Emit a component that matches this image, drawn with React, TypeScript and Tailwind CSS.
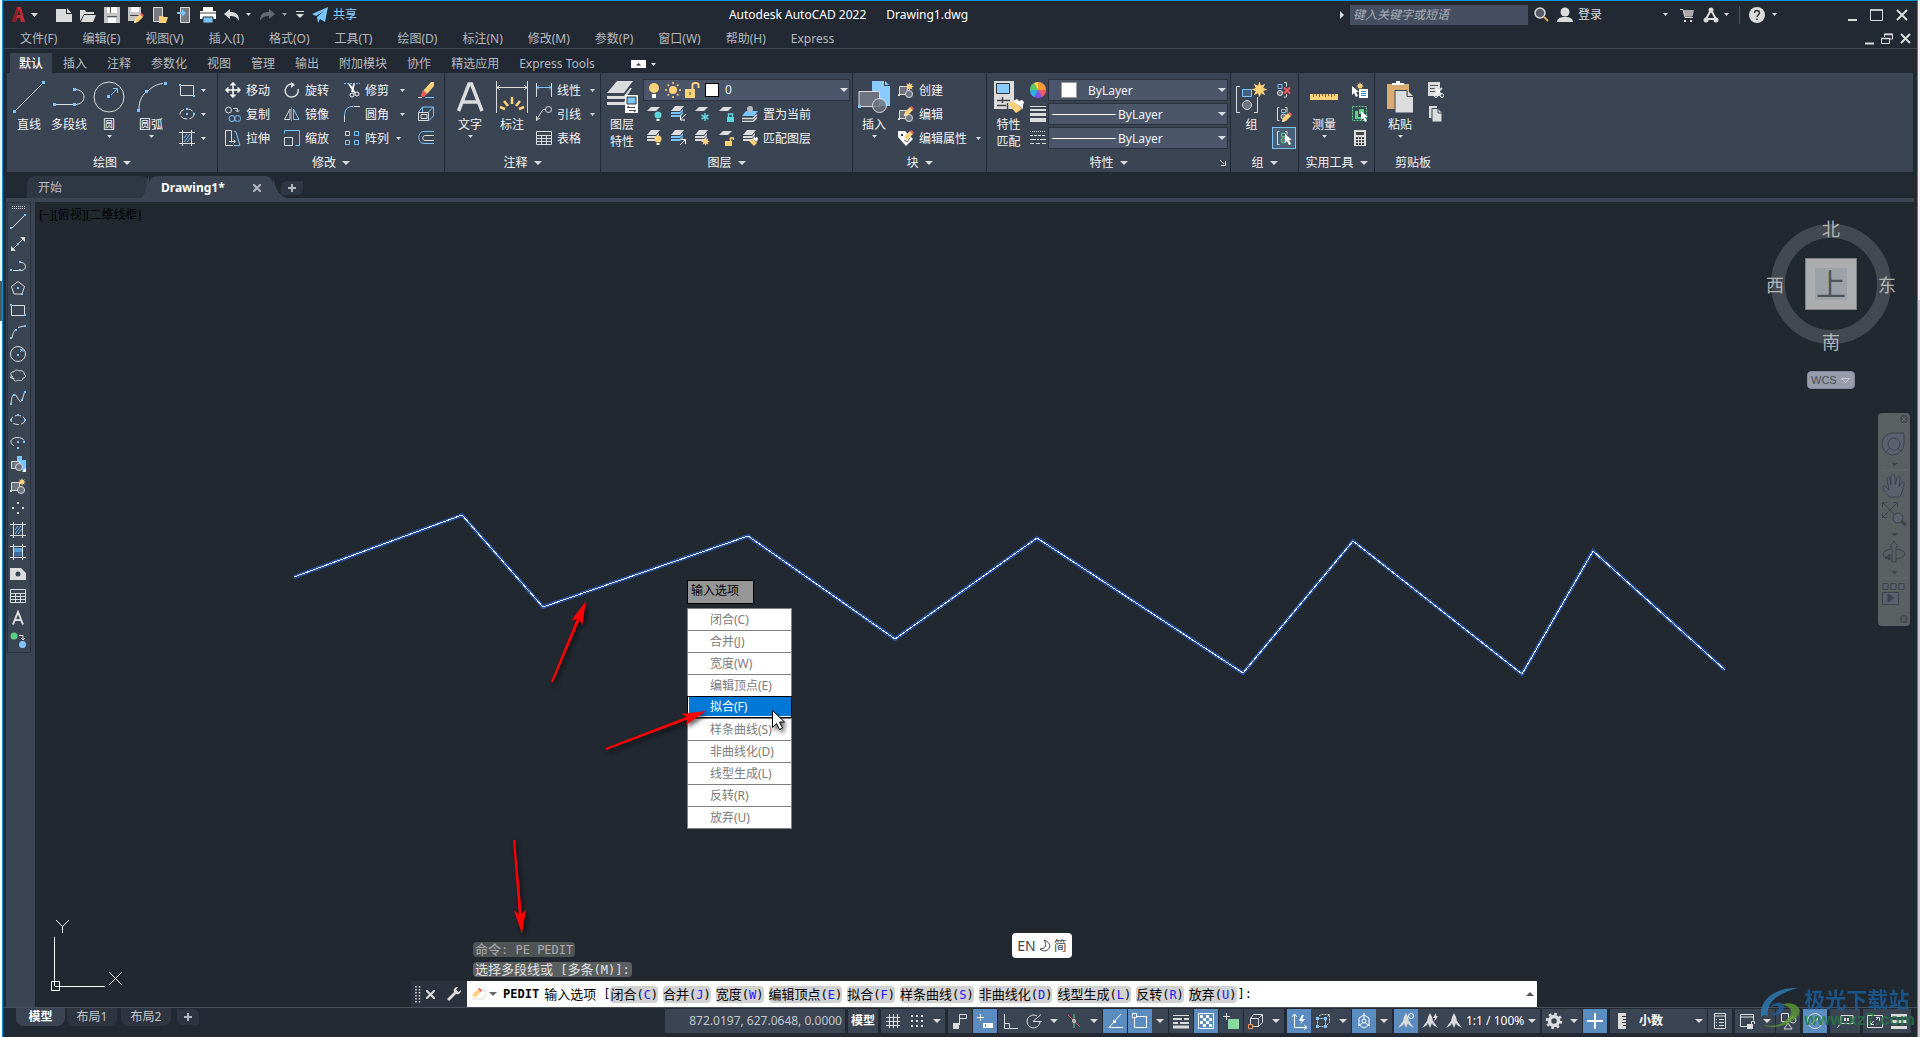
import React, { ReactNode } from "react";

const FG = "#dcdcdc";
const BL = "#78c5ff";
const YE = "#ffd27a";
const GY = "#6d747f";

type SvgProps = { s?: number; w?: number; h?: number; children: ReactNode; className?: string };

function Svg({ s = 16, w, h, children, className = "" }: SvgProps) {
  const ww = w ?? s;
  const hh = h ?? s;
  return (
    <svg
      width={ww}
      height={hh}
      viewBox={`0 0 ${ww} ${hh}`}
      fill="none"
      stroke={FG}
      strokeWidth={1}
      className={`shrink-0 ${className}`}
      aria-hidden="true"
    >
      {children}
    </svg>
  );
}

function Tri({ className = "", big = false, color = FG }: { className?: string; big?: boolean; color?: string }) {
  return big ? (
    <Svg w={8} h={4} className={className}>
      <path d="M0 0h8L4 4z" fill={color} stroke="none" />
    </Svg>
  ) : (
    <Svg w={5} h={3} className={className}>
      <path d="M0 0h5L2.500 3z" fill={color} stroke="none" />
    </Svg>
  );
}

const dot = (x: number, y: number, c = BL, r = 3) => (
  <rect x={x} y={y} width={r} height={r} fill={c} stroke="none" />
);

const star = (cx: number, cy: number, r: number, c = YE) => {
  const pts: string[] = [];
  for (let i = 0; i < 16; i++) {
    const a = (Math.PI * i) / 8;
    const q = i % 2 === 0 ? r : r * 0.5;
    pts.push(`${(cx + q * Math.sin(a)).toFixed(1)},${(cy - q * Math.cos(a)).toFixed(1)}`);
  }
  return <polygon points={pts.join(" ")} fill={c} stroke="none" />;
};

const pencil = (x: number, y: number) => (
  <g transform={`translate(${x} ${y})`} stroke="none">
    <path d="M0 10l1-4 5-5 3 3-5 5z" fill={YE} />
    <path d="M6 1l1.500-1L10 2.500 9 4z" fill="#f0585c" />
    <path d="M0 10l.7-2.500L2.500 9.300z" fill="#fff" />
  </g>
);

const cursor = (x: number, y: number, c = "#fff") => (
  <path transform={`translate(${x} ${y})`} d="M0 0v9l2-2 2 4 2-1-2-4h3z" fill={c} stroke="none" />
);

const sheet = (x: number, y: number, c: string) => (
  <path transform={`translate(${x} ${y})`} d="M5 0h9l-4 4H1z" fill={c} stroke="none" />
);

const sheets = (c2 = FG) => (
  <g stroke="none">
    <path d="M5 0h9l-4 5H1z" fill={FG} />
    <path d="M1 6h9l3-3v2l-3 3H1z" fill={c2} />
    <path d="M1 9h9l3-3v2l-3 3H1z" fill={c2} />
  </g>
);

/* ---------- drawing icons ---------- */

const hatch = (
  <>
    <path d="M3.500 0v16M12.500 0v16M0 2.500h16M0 13.500h16" />
    <path d="M5 8l3-4M5 12l6-8M8 12l4-5" stroke={BL} />
  </>
);

const blockIcon = (
  <>
    <path d="M1.500 12.500v-8h8v8z" fill={GY} />
    <circle cx="11" cy="12" r="3.500" fill={GY} />
    {dot(0, 12, FG, 2)}
  </>
);

const tableIcon = (
  <path d="M.5 1.500h15v13H.5zM.5 5.500h15M.5 8.500h15M.5 11.500h15M5.500 5.500v9M10.500 5.500v9" />
);

const arcIcon = (
  <>
    <path d="M2 14c1-5 2-7 4-9M8 3.500L14 2" />
    {dot(0, 13, BL, 2)}
    {dot(5, 5, BL, 2)}
    {dot(14, 1, BL, 2)}
  </>
);

const rail: [string, ReactNode][] = [
  ["直线", <><path d="M2 14L14 2" />{dot(0, 13, BL, 2)}{dot(14, 0, BL, 2)}</>],
  ["构造线", <><path d="M1 15L15 1" /><path d="M10 1h5v5zM1 10v5h5z" fill={FG} stroke="none" />{dot(7, 7, BL, 2)}</>],
  ["多段线", <><path d="M3 12.500h6M11 4.500c6 0 6 8 0 8" />{dot(0, 11, BL, 2)}{dot(9, 11, BL, 2)}{dot(9, 3, BL, 2)}</>],
  ["多边形", <><path d="M8 1.500L14.500 6.500 12 14H4L1.500 6.500z" />{dot(7, 7, BL, 2)}{dot(11, 13, BL, 2)}</>],
  ["矩形", <><path d="M1.500 3.500h13v10h-13z" />{dot(0, 2, BL, 2)}{dot(14, 12, BL, 2)}</>],
  ["圆弧", arcIcon],
  ["圆", <><circle cx="8" cy="8" r="7.500" />{dot(7, 8, BL, 2)}<path d="M10 6l2-2M10 3.500h3V6" stroke={BL} /></>],
  ["修订云线", <path d="M3 9C0 8 0 3 4 4c1-3 4-2 5-1 3-1 6 1 5 3 3 2 1 4-1 4 0 3-3 3-5 2-2 2-5 1-4-2-1 1-3 0-4-1z" />],
  ["样条曲线", <><path d="M1 14C2 2 5 3 7 7s4 6 5 3 2-5 2.500-8" />{dot(0, 13, BL, 2)}{dot(3, 4, BL, 2)}{dot(11, 9, BL, 2)}{dot(14, 1, BL, 2)}</>],
  ["椭圆", <><ellipse cx="8" cy="8" rx="7" ry="4.500" strokeDasharray="6 2" />{dot(0, 7, BL, 2)}{dot(14, 7, BL, 2)}{dot(7, 2, BL, 2)}</>],
  ["椭圆弧", <><path d="M4 12C-1 9 0 4 7 3.500c4 0 6 1 7 3" />{dot(7, 7, BL, 2)}{dot(13, 7, BL, 2)}{dot(7, 13, BL, 2)}</>],
  ["插入块", <><path d="M7 0h5v4h4v11h-3l-6-6z" fill={BL} stroke="none" /><path d="M1.500 5.500h8v7h-8z" fill={GY} /><circle cx="9" cy="11" r="3.500" fill={GY} /><path d="M12 16h4v-4z" fill="#fff" stroke="none" /></>],
  ["创建块", <>{blockIcon}{star(12, 4, 4)}</>],
  ["点", <>{dot(7, 2, FG, 2)}{dot(2, 7, FG, 2)}{dot(12, 7, FG, 2)}{dot(7, 12, FG, 2)}</>],
  ["图案填充", hatch],
  ["渐变色", <><rect x="4" y="4" width="8" height="8" fill="#5a9bd0" stroke="none" /><rect x="4" y="8" width="8" height="4" fill="#3f6b95" stroke="none" /><path d="M3.500 0v16M12.500 0v16M0 2.500h16M0 13.500h16" /></>],
  ["面域", <path fillRule="evenodd" d="M0 2h11l5 5v7H0zM10.500 8a2.500 2.500 0 1 0-5 0 2.500 2.500 0 1 0 5 0z" fill={FG} stroke="none" />],
  ["表格", tableIcon],
  ["多行文字", <path d="M3 14.500L8 2l5 12.500M5 10h6" strokeWidth="2" />],
  ["添加选定对象", <><circle cx="4" cy="4" r="3.500" fill="#5bd184" stroke="none" /><circle cx="12.500" cy="12.500" r="3.500" fill="#86c6ff" stroke="none" /><path d="M9 3.500h4v4M11 6l2 2 2-2" /></>],
];

/* ---------- ribbon building blocks ---------- */

function Panel({ title, width, arrow = true, launcher = false, children }: { title: string; width: string; arrow?: boolean; launcher?: boolean; children: ReactNode }) {
  return (
    <section className={`flex shrink-0 flex-col ${width}`}>
      <div className="flex h-[77px] items-start pt-[5px]">{children}</div>
      <div className="relative flex h-[22px] justify-center pt-[3px]">
        <button className="flex items-center gap-1.5 leading-none">
          {title}
          {arrow && <Tri big />}
        </button>
        {launcher && (
          <button aria-label="对话框" className="absolute right-1 top-2.5">
            <Svg w={6} h={6}><path d="M0 0l4 4M5.500 1v4.500H1" /></Svg>
          </button>
        )}
      </div>
    </section>
  );
}

function Big({ icon, label, second, width, arrow = false }: { icon: ReactNode; label: string; second?: string; width: string; arrow?: boolean }) {
  return (
    <button className={`flex shrink-0 flex-col items-center pt-[3px] ${width}`}>
      <Svg s={32}>{icon}</Svg>
      <span className="mt-[3px] whitespace-nowrap leading-[17px]">{label}</span>
      {second && <span className="leading-[17px]">{second}</span>}
      {arrow && <Tri className="mt-0.5" />}
    </button>
  );
}

function Small({ icon, label, arrow = false, gap = "gap-[5px]", tri = "ml-1", name }: { icon: ReactNode; label?: string; arrow?: boolean; gap?: string; tri?: string; name?: string }) {
  return (
    <button aria-label={name} className={`flex h-6 items-center whitespace-nowrap ${gap}`}>
      <Svg>{icon}</Svg>
      {label && <span className="pt-0.5">{label}</span>}
      {arrow && <Tri className={tri} />}
    </button>
  );
}

const colClass = "flex shrink-0 flex-col items-start";

const bulb = (x: number, y: number, c: string) => (
  <g stroke="none"><circle cx={x} cy={y} r="3.500" fill={c} /><rect x={x - 1.5} y={y + 4} width="3" height="2" fill="#fff" /></g>
);

const lock = (x: number, y: number, c: string, open = false) => (
  <g>
    <rect x={x} y={y} width="7" height="5" fill={c} stroke="none" />
    <path d={open ? `M${x + 5.5} ${y}v-3h3v2` : `M${x + 1.5} ${y}v-3h4v3`} stroke={c} strokeWidth="1.500" />
  </g>
);

const groupIcon = (c = BL) => (
  <>
    <path d="M3.500 1.500H1.500v13h2" />
    <path d="M5.500 3.500h4v3h-4z" stroke={c} />
    <circle cx="7.500" cy="10.500" r="2.500" stroke={c === BL ? FG : c} fill={GY} />
  </>
);

function Combo({ label, value, line }: { label: string; value: string; line?: boolean }) {
  return (
    <label className="flex h-[22px] w-full items-center border border-[#2b323e] bg-[#4b566a] pr-px">
      {line ? (
        <span className="ml-[3px] h-px w-16 shrink-0 bg-white" />
      ) : (
        <span className="ml-3 mr-[9px] size-4 shrink-0 border border-[#999] bg-white" />
      )}
      <select aria-label={label} className="h-5 min-w-0 flex-1 appearance-none bg-transparent pl-0.5 pt-px outline-none">
        <option>{value}</option>
      </select>
      <Tri big />
    </label>
  );
}

/* ---------- top area ---------- */

function QBtn({ name, children }: { name: string; children: ReactNode }) {
  return (
    <button aria-label={name} className="flex w-6 shrink-0 items-center justify-center">
      <Svg>{children}</Svg>
    </button>
  );
}

function TitleBar() {
  return (
    <header className="flex h-[27px] shrink-0 items-center">
      <button aria-label="应用程序菜单" className="ml-2 flex w-[41px] items-center gap-[5px]">
        <Svg w={15} h={17}>
          <path d="M1 16L6 1h4l4 15h-4l-1-4H6l-1 4z" fill="#c22b31" stroke="none" />
          <path d="M6.500 9L8 4l1.500 5z" fill="#222933" stroke="none" />
          <path d="M1 16L6 1l1 3-2 12z" fill="#8d1f26" stroke="none" />
        </Svg>
        <Svg w={7} h={4}><path d="M0 0h7L3.500 4z" fill={FG} stroke="none" /></Svg>
      </button>
      <QBtn name="新建"><path d="M0 2h10v5h6v8H0z" fill={FG} stroke="none" /><path d="M11 1l4.500 5H11z" fill={FG} stroke="none" /></QBtn>
      <QBtn name="打开"><path d="M0 14V3h5l1 2h8v2H4L0 14" fill={FG} stroke="none" /><path d="M4 8h12l-3 7H1z" fill={FG} stroke="none" /></QBtn>
      <QBtn name="保存"><path d="M0 0h16v16H0z" fill="#c4c4c4" stroke="none" /><path d="M3 0h10v6H3zM4 11h8v5H4z" fill="#fff" stroke="none" /><path d="M3 9.500h10M6.500 0v6" stroke="#555" /></QBtn>
      <QBtn name="另存为"><path d="M0 0h13v7l-6 7H0z" fill="#c4c4c4" stroke="none" /><path d="M3 0h8v5H3z" fill="#fff" stroke="none" /><path d="M2 8.500h9" stroke="#444" />{pencil(6, 6)}</QBtn>
      <QBtn name="从移动设备打开"><path d="M1.500.500h9v14h-9z" fill="#777b80" stroke={FG} /><path d="M7 9h4l1 1h4l-2 6H7z" fill={YE} stroke="none" /></QBtn>
      <QBtn name="保存到移动设备"><path d="M4.500.500h9v15h-9z" fill="#777b80" stroke={FG} /><path d="M1 5h5V2l4 4-4 4V7H1z" fill={BL} stroke="none" /></QBtn>
      <QBtn name="打印"><path d="M3 0h10v4h3v8H0V4h3z" fill="#fff" stroke="none" /><path d="M0 6h16" stroke="#444" /><path d="M3 10h10v6H3z" fill={BL} stroke="#333" /></QBtn>
      <QBtn name="放弃"><path d="M0 7l6-5v3c6 0 9 2 9 9-2-4-5-5-9-5v3z" fill={FG} stroke="none" /></QBtn>
      <Tri className="ml-0.5" />
      <span className="ml-1 flex">
        <QBtn name="重做"><path d="M16 7l-6-5v3C4 5 1 7 1 14c2-4 5-5 9-5v3z" fill="#636973" stroke="none" /></QBtn>
      </span>
      <Tri className="ml-[3px]" color="#9a9ea5" />
      <Svg w={8} h={7} className="ml-[9px]"><path d="M0 .5h8" /><path d="M0 3h8L4 7z" fill={FG} stroke="none" /></Svg>
      <button className="ml-2 flex items-center gap-[5px] text-[#8fd0ff]">
        <Svg><path d="M0 7L16 0l-3 15-5-3-2 4-1-6 7-6-8 5z" fill={BL} stroke="none" /></Svg>
        共享
      </button>
      <h1 className="flex flex-1 justify-center gap-5 whitespace-nowrap text-white"><span>Autodesk AutoCAD 2022</span><span>Drawing1.dwg</span></h1>
      <Svg w={5} h={8}><path d="M0 0l4 4-4 4z" fill={FG} stroke="none" /></Svg>
      <input aria-label="搜索" placeholder="键入关键字或短语" className="ml-[5px] h-5 w-[178px] bg-[#464e61] px-[3px] italic outline-none placeholder:italic placeholder:text-[#a9afba]" />
      <button aria-label="查找" className="ml-1.5"><Svg><circle cx="6" cy="6" r="5" fill="#555b66" strokeWidth="1.500" /><path d="M10 10l4 4" stroke="#d9a860" strokeWidth="2" /></Svg></button>
      <button className="ml-[7px] flex items-center gap-[5px]"><Svg><circle cx="8" cy="5" r="4.500" fill={FG} stroke="none" /><path d="M0 15c0-4 4-5 8-5s8 1 8 5z" fill={FG} stroke="none" /></Svg>登录</button>
      <Tri className="ml-[61px]" />
      <button aria-label="商店" className="ml-3"><Svg w={15} h={16}><path d="M0 2.500h3l2 8h8M4 5h9l-1 4H5z" /><path d="M4 3h10l-2 6H5z" fill="#aaa" stroke="none" />{dot(4, 13, FG, 2)}{dot(10, 13, FG, 2)}</Svg></button>
      <button aria-label="应用" className="ml-2"><Svg><path d="M8 3L3 12h10z" strokeWidth="2" /><circle cx="8" cy="3" r="2.500" fill={FG} stroke="none" /><circle cx="3" cy="13" r="2.500" fill={FG} stroke="none" /><circle cx="13" cy="13" r="2.500" fill={FG} stroke="none" /></Svg></button>
      <Tri className="ml-[5px]" />
      <span className="ml-2.5 h-[18px] w-px bg-[#4a5160]" />
      <button aria-label="帮助" className="ml-[9px]"><Svg><circle cx="8" cy="8" r="8" fill={FG} stroke="none" /><path d="M5.500 6c0-3.500 5-3.500 5 0 0 1.500-2.500 2-2.500 4M8 11.500v1.500" stroke="#333" strokeWidth="1.500" /></Svg></button>
      <Tri className="ml-[7px]" />
      <div className="ml-[71px] mr-[9px] flex w-[60px] items-center justify-between">
        <button aria-label="最小化"><Svg w={9} h={12}><path d="M0 11h9" strokeWidth="2" /></Svg></button>
        <button aria-label="最大化"><Svg w={13} h={12}><path d="M.5 1h12v10.500H.5z" /><path d="M0 1h13" strokeWidth="1.500" /></Svg></button>
        <button aria-label="关闭"><Svg w={12} h={12}><path d="M1 1l10 10M11 1L1 11" strokeWidth="2" /></Svg></button>
      </div>
    </header>
  );
}

const menus = ["文件(F)", "编辑(E)", "视图(V)", "插入(I)", "格式(O)", "工具(T)", "绘图(D)", "标注(N)", "修改(M)", "参数(P)", "窗口(W)", "帮助(H)", "Express"];
const tabs = ["插入", "注释", "参数化", "视图", "管理", "输出", "附加模块", "协作", "精选应用", "Express Tools"];

function Ribbon() {
  return (
    <div className="ml-1 mr-1 flex h-[99px] shrink-0 divide-x divide-[#222933] overflow-hidden bg-[#3b4453] text-[#f2f2f2]">
      <Panel title="绘图" width="w-[211px]">
        <Big width="w-11" label="直线" icon={<><path d="M2 30L30 2" />{dot(0, 29)}{dot(29, 0)}</>} />
        <Big width="w-9" label="多段线" icon={<><path d="M3 23.500h17M22 8.500c12 0 12 15 0 15" />{dot(0, 22)}{dot(20, 22)}{dot(20, 7)}</>} />
        <Big width="w-11" label="圆" arrow icon={<><circle cx="16" cy="16" r="15" />{dot(14, 14)}<path d="M18 14l6-6M20 7.500h4.500V12" stroke={BL} /></>} />
        <Big width="w-10" label="圆弧" arrow icon={<><path d="M4 28c0-8 3-13 6-16M13 10c4-4 9-7 15-7.500" />{dot(2, 28)}{dot(10, 9)}{dot(29, 1)}</>} />
        <div className={`ml-2 ${colClass}`}>
          <Small name="矩形" arrow gap="gap-[6px]" tri="" icon={<><path d="M1.500 3.500h13v10h-13z" />{dot(0, 2, BL, 2)}{dot(14, 13, BL, 2)}</>} />
          <Small name="椭圆" arrow gap="gap-[6px]" tri="" icon={<><ellipse cx="8" cy="8" rx="7" ry="5" strokeDasharray="7 2" />{dot(7, 7, BL, 2)}{dot(14, 7, BL, 2)}{dot(7, 2, BL, 2)}</>} />
          <Small name="图案填充" arrow gap="gap-[6px]" tri="" icon={hatch} />
        </div>
      </Panel>

      <Panel title="修改" width="w-[227px]">
        <div className={`ml-[7px] w-[59px] ${colClass}`}>
          <Small label="移动" icon={<path d="M8 1v14M1 8h14M5.500 3.500L8 1l2.500 2.500M5.500 12.500L8 15l2.500-2.500M3.500 5.500L1 8l2.500 2.500M12.500 5.500L15 8l-2.500 2.500" stroke="#fff" strokeWidth="1.500" />} />
          <Small label="复制" icon={<><circle cx="3.500" cy="4" r="3" /><circle cx="7" cy="12.500" r="3" stroke={BL} /><circle cx="12.500" cy="12.500" r="3" stroke={BL} /><path d="M8 2.500h4.500v3M10.500 4l2 2 2-2" /></>} />
          <Small label="拉伸" icon={<><path d="M8 15.500H.5V.5h6v12" /><path d="M9 1l2 1 4 13.500H9" stroke={BL} /><path d="M4 11.500h6M8.500 9.500l2 2-2 2" /></>} />
        </div>
        <div className={`w-[60px] ${colClass}`}>
          <Small label="旋转" icon={<><path d="M10 2.500a6.500 6.500 0 1 0 4 4.500" strokeWidth="1.500" /><path d="M7 0l4 3-4 3z" fill={FG} stroke="none" /></>} />
          <Small label="镜像" icon={<><path d="M.5 13.500h5.500V3z" /><path d="M9.500 13.500h5.500L9.500 3z" stroke={BL} /><path d="M7.500 1v14" stroke={BL} strokeWidth=".6" /></>} />
          <Small label="缩放" icon={<><path d="M.5 3.500V.5h15v15h-4" stroke={BL} /><path d="M.5 7.500h8v8h-8z" /></>} />
        </div>
        <div className={`w-[74px] ${colClass}`}>
          <Small label="修剪" arrow tri="ml-1.5" icon={<><path d="M0 1.500h16" stroke={BL} strokeDasharray="2 1" /><path d="M5 2l6 9M10 2L8 10" strokeWidth="1.800" stroke="#fff" /><circle cx="8" cy="13" r="2" stroke="#fff" /><circle cx="13" cy="12" r="2" stroke="#fff" /></>} />
          <Small label="圆角" arrow tri="ml-1.5" icon={<><path d="M10 .5h6M.5 10v6" /><path d="M9 .5C3 .5.500 4 .5 10" stroke={BL} /></>} />
          <Small label="阵列" arrow tri="ml-0.5" icon={<><path d="M1.500 1.500h4v4h-4z" /><path d="M10.500 1.500h4v4h-4zM1.500 10.500h4v4h-4zM10.500 10.500h4v4h-4z" stroke={BL} /></>} />
        </div>
        <div className={colClass}>
          <Small name="删除" icon={<><path d="M5 9L13 0h3v4L9 12z" fill={YE} stroke="none" /><path d="M5 8l4 4-3 3H4l-1-2z" fill="#f0585c" stroke="none" /><path d="M0 15.500h4" /><path d="M7 15.500h9" stroke={BL} /></>} />
          <Small name="分解" icon={<><path d="M.5 6.500h10v8H.5zM3 8.500h6v4H3z" /><path d="M.5 6l4-5h11v9l-5 5M10.500 6l5-5M4.500 1v5" stroke={BL} /></>} />
          <Small name="偏移" icon={<><path d="M16 1.500H6c-7 0-7 12 0 12h10" stroke={BL} /><path d="M16 5.500H7c-3 0-3 5 0 5h9" /></>} />
        </div>
      </Panel>

      <Panel title="注释" width="w-[156px]">
        <Big width="w-[50px]" label="文字" arrow icon={<path d="M4.500 30L15 3h2.500L28 30M8 21h16" strokeWidth="3.500" />} />
        <Big width="w-[34px]" label="标注" icon={<><path d="M.5 0v32M31.500 0v32M1 6.500h30M4 4l-3 2.500L4 9M28 4l3 2.500L28 9" />{[[4, 26, 9, 28], [8, 20, 12, 25], [16, 16, 16, 23], [24, 20, 20, 25], [28, 26, 23, 28]].map((l, i) => (<path key={i} d={`M${l[0]} ${l[1]}L${l[2]} ${l[3]}`} stroke={YE} strokeWidth="2.500" />))}</>} />
        <div className={`ml-[7px] ${colClass}`}>
          <Small label="线性" arrow icon={<><path d="M.5 1v14M15.500 1v14" /><path d="M1 5.500h14M3 3.500l-2 2 2 2M13 3.500l2 2-2 2" stroke={BL} /></>} />
          <Small label="引线" arrow icon={<><circle cx="12.500" cy="3.500" r="3" /><path d="M9.500 3.500H7L1 13M.5 10v4.500L4 12" /></>} />
          <Small label="表格" icon={tableIcon} />
        </div>
      </Panel>

      <Panel title="图层" width="w-[252px]">
        <Big width="w-[42px]" label="图层" second="特性" icon={<><g stroke="none" fill={FG}><path d="M11 0h16l-9 12H1z" /><path d="M1 15h17l6-8h2l-7 11H1z" /><path d="M1 21h17l3-4v7H1z" /></g><path d="M19 14h13v18H19z" fill="#fff" stroke="none" /><path d="M21 16h9v7h-9z" fill={BL} stroke="#333" /><path d="M21 26.500h8M23 29.500h7M23 25l-2 1.500M28 31l2-1.500" stroke="#444" /></>} />
        <div className="flex flex-col">
          <label className="mt-px flex h-[22px] w-[207px] items-center border border-[#2b323e] bg-[#4b566a] pl-[5px] pr-px">
            <Svg w={10} h={15}><circle cx="5" cy="5" r="5" fill={YE} stroke="none" /><path d="M3 11h4v4H3z" fill="#fff" stroke="none" /></Svg>
            <Svg className="ml-1.5"><circle cx="8" cy="8" r="4" fill={YE} stroke="none" /><path d="M8 0v2M8 14v2M0 8h2M14 8h2M2.500 2.500l1.500 1.500M12 12l1.500 1.500M13.500 2.500L12 4M4 12l-1.500 1.500" stroke={YE} strokeWidth="1.500" /></Svg>
            <Svg className="ml-[3px]"><path d="M1 7h10v9H1z" fill={YE} stroke="none" /><path d="M8.500 7V2.500q0-1.500 3-1.500t3 1.500V6" stroke={YE} strokeWidth="2" /><path d="M6 10v3" stroke="#444" /></Svg>
            <span className="ml-[5px] size-3.5 shrink-0 border border-black bg-white" />
            <select aria-label="图层" className="h-5 min-w-0 flex-1 appearance-none bg-transparent pl-1.5 outline-none"><option>0</option></select>
            <Tri big />
          </label>
          <div className="ml-[3px] mt-px flex gap-2">
            <Small name="关闭图层" icon={<>{sheet(0, 1, FG)}{bulb(12, 9, "#5fd3dc")}</>} />
            <Small name="隔离" icon={<>{sheets(BL)}<path d="M16 8l-5 5M10.500 9.500v4.500H15" stroke="#fff" /></>} />
            <Small name="冻结" icon={<>{sheet(0, 1, FG)}<path d="M11 7v8M7.500 9l7 4M14.500 9l-7 4" stroke="#5fd3dc" strokeWidth="1.500" /></>} />
            <Small name="锁定" icon={<>{sheet(0, 1, FG)}{lock(9, 11, "#5fd3dc")}</>} />
            <Small label="置为当前" icon={<><path d="M4 5h12l-4 5H0z" fill={BL} stroke="none" /><circle cx="8" cy="3" r="3" fill="#b8bcc2" stroke="none" /><path d="M0 12.500h11l4-4M0 15.500h11l4-4" strokeWidth="1.500" /></>} />
          </div>
          <div className="ml-[3px] flex gap-2">
            <Small name="打开所有图层" icon={<>{sheets()}{bulb(12, 9, YE)}</>} />
            <Small name="取消隔离" icon={<>{sheets(BL)}<path d="M10 15l5-5M11 9.500h4.500V14" stroke="#fff" /></>} />
            <Small name="解冻" icon={<>{sheets()}{star(11.5, 11.5, 4.5)}</>} />
            <Small name="解锁" icon={<>{sheet(0, 1, FG)}{lock(7, 11, YE, true)}</>} />
            <Small label="匹配图层" icon={<>{sheets()}<path d="M7 11l4-2 4 4-3 3z" fill={YE} stroke="none" /><path d="M11 9l4-2 1 1-1 4z" fill="#fff" stroke="none" /></>} />
          </div>
        </div>
      </Panel>

      <Panel title="块" width="w-[134px]">
        <Big width="w-[42px]" label="插入" arrow icon={<><path d="M14 0h12v5h6v20H14z" fill="#8accff" stroke="none" /><path d="M27 0l4 4h-4z" fill="#8accff" stroke="none" /><path d="M1 10.500h20.500v15H1z" fill={GY} /><circle cx="21.500" cy="24.500" r="7" fill={GY} fillOpacity=".8" />{dot(0, 24)}</>} />
        <div className={`ml-[3px] ${colClass}`}>
          <Small label="创建" icon={<>{blockIcon}{star(11.5, 4.5, 4.5)}</>} />
          <Small label="编辑" icon={<>{blockIcon}{pencil(6, 0)}</>} />
          <Small label="编辑属性" arrow icon={<><path d="M0 1h7l8 8-7 7-8-9z" fill="#fff" stroke="none" />{dot(3, 4, "#3b4453", 2)}<path d="M6 10l3 2 3-4" stroke="#555" />{pencil(6, 0)}</>} />
        </div>
      </Panel>

      <Panel title="特性" width="w-[244px]" launcher>
        <Big width="w-[43px]" label="特性" second="匹配" icon={<><path d="M1 0h20v28H1z" fill={FG} stroke="none" /><path d="M3.500 2.500h13v10h-13z" fill="#8accff" stroke="#333" /><path d="M4 19.500h13M4 24.500h9M9.500 16v6M14.500 22v6" stroke="#444" strokeWidth="1.500" /><path d="M15 23l6-3 8 8-6 4z" fill={YE} stroke="none" /><path d="M20 20l4-2 2 2 3-1 2 2-1 3v4z" fill="#fff" stroke="none" /></>} />
        <div className={`w-[18px] ${colClass}`}>
          <Small name="对象颜色" icon={<g stroke="none"><circle cx="8" cy="8" r="8" fill="#7d55e8" /><path d="M8 8V0a8 8 0 0 1 8 8z" fill="#f59b3a" /><path d="M8 8h8a8 8 0 0 1-4 7z" fill="#ee5a6b" /><path d="M8 8l-4 7A8 8 0 0 1 0 8z" fill="#27b3e5" /><path d="M8 8H0a8 8 0 0 1 4-7z" fill="#5bc95b" /><path d="M8 8L4 1a8 8 0 0 1 4-1z" fill="#f7d33a" /></g>} />
          <Small name="线宽" icon={<><path d="M0 .5h16" /><path d="M0 4h16" strokeWidth="2" /><path d="M0 8.500h16" strokeWidth="3" /><path d="M0 14h16" strokeWidth="4" /></>} />
          <Small name="线型" icon={<><path d="M0 1.500h16" strokeDasharray="1 1" /><path d="M0 5.500h16" strokeDasharray="3 1" /><path d="M0 9.500h16" strokeDasharray="6 1 2 1" /><path d="M0 13.500h16" strokeDasharray="4 2" /></>} />
        </div>
        <div className="mt-px flex w-[180px] flex-col gap-0.5">
          <Combo label="颜色" value="ByLayer" />
          <Combo label="线宽" value="ByLayer" line />
          <Combo label="线型" value="ByLayer" line />
        </div>
      </Panel>

      <Panel title="组" width="w-[68px]">
        <Big width="w-[41px]" label="组" icon={<><path d="M4 5.500H.5v26H4M18 31.500h3.500V16" /><path d="M6.500 8.500h9v7h-9z" stroke={BL} fill="#46607c" /><circle cx="11" cy="24" r="4.500" fill={GY} />{star(23.5, 8.5, 8)}</>} />
        <div className="flex flex-col">
          <span className="flex h-6 w-6 items-center justify-center"><Small name="解除编组" icon={<><path d="M2 2.500h4v4H2z" stroke={BL} /><circle cx="4" cy="11" r="2.500" fill={GY} /><path d="M8 .5h2.500v4M10.500 12v3H8" /><path d="M8 5.500l6 6M14 5.500l-6 6" stroke="#f0585c" strokeWidth="2" /></>} /></span>
          <span className="flex h-6 w-6 items-center justify-center"><Small name="组编辑" icon={<>{groupIcon()}<path d="M9 1.500h2v5" />{pencil(6, 6)}</>} /></span>
          <span className="mt-px flex h-[22px] w-6 items-center justify-center border border-[#78c5ff] bg-[#4a6077]"><Small name="组选择" icon={<>{groupIcon("#5bd184")}<path d="M9 1.500h2v3" />{cursor(9, 4)}</>} /></span>
        </div>
      </Panel>

      <Panel title="实用工具" width="w-[76px]">
        <Big width="w-[50px]" label="测量" arrow icon={<><path d="M2 13h28v6H2z" fill={YE} stroke="none" /><path d="M5.500 13v3M8.500 13v2M11.500 13v3M14.500 13v2M17.500 13v3M20.500 13v2M23.500 13v3M26.500 13v2" stroke="#7a6230" /></>} />
        <div className={`ml-[3px] ${colClass}`}>
          <Small name="快速选择" icon={<>{star(8, 4, 4)}{cursor(0, 4)}<path d="M7 7h9v9H7z" fill="#fff" stroke="none" /><path d="M9 9.500h5M9 11.500h5M9 13.500h5" stroke="#2e8fd6" /></>} />
          <Small name="全部选择" icon={<><path d="M.5.500h14v14H.5z" stroke="#5bd184" strokeDasharray="2 1" /><path d="M3 5h3v6h5v2H3zM7 3h5v5H7z" fill="#5bd184" stroke="none" />{cursor(9, 5)}</>} />
          <Small name="快速计算器" icon={<><path d="M2 0h12v16H2z" fill={FG} stroke="none" /><path d="M4 2h8v3H4z" fill="#444" stroke="none" /><path d="M4 8h8M4 11h8M4 14h8" stroke="#444" strokeWidth="2" strokeDasharray="2 1" /></>} />
        </div>
      </Panel>

      <Panel title="剪贴板" width="w-[76px]" arrow={false}>
        <Big width="w-[50px]" label="粘贴" arrow icon={<><path d="M3 3h22v25H3z" fill="#d9ad72" stroke="none" /><path d="M8 4V2h4V0h4v2h4v2z" fill="#fff" stroke="none" /><path d="M11 9.500h12v6h6.500V32H11z" fill={FG} stroke="#3b4453" /><path d="M24 10l5 5h-5z" fill={FG} stroke="none" /></>} />
        <div className={`ml-[3px] ${colClass}`}>
          <Small name="剪切" icon={<><path d="M0 0h12v14H0z" fill={FG} stroke="none" /><path d="M2 3.500h8M2 6.500h6M2 9.500h5" stroke="#555" /><path d="M7 6l6 6M14 6l-6 6" stroke="#fff" strokeWidth="1.500" /><circle cx="8" cy="13.500" r="1.800" stroke="#fff" /><circle cx="14" cy="13.500" r="1.800" stroke="#fff" /></>} />
          <Small name="复制剪裁" icon={<><path d="M1 0h8v12H1z" fill={FG} stroke="none" /><path d="M4 2.500h6l4 4V16H4z" fill={FG} stroke="#3b4453" /><path d="M10 2v5h4" stroke="#3b4453" /></>} />
        </div>
      </Panel>
    </div>
  );
}

function FileTabs() {
  return (
    <div className="flex h-[26px] shrink-0 items-end pl-6">
      <button className="flex h-[22px] w-[122px] items-center rounded-t-lg bg-[#303744] pl-[11px] pt-px text-left text-[#b9bdc4]">开始</button>
      <div className="relative flex h-[22px] w-[124px] items-center rounded-t-lg bg-[#3b4453] pl-3 pt-px">
        <Svg w={8} h={22} className="absolute -left-2 top-0"><path d="M8 0v22H0c6-3 5-20 8-22z" fill="#3b4453" stroke="none" /></Svg>
        <Svg w={14} h={22} className="absolute -right-3.5 top-0"><path d="M0 3c3 8 4 16 14 19H0z" fill="#3b4453" stroke="none" /></Svg>
        <button className="font-bold text-white">Drawing1*</button>
        <button aria-label="关闭图形" className="ml-auto mr-3"><Svg w={8} h={8}><path d="M0 0l8 8M8 0L0 8" stroke="#b4b8be" strokeWidth="2" /></Svg></button>
      </div>
      <button aria-label="新图形" className="mb-[3px] ml-2 flex h-3.5 w-[22px] items-center justify-center rounded-tl-md rounded-br-md bg-[#303744]">
        <Svg w={8} h={8}><path d="M4 0v8M0 4h8" stroke="#b4b8be" strokeWidth="2" /></Svg>
      </button>
    </div>
  );
}

/* ---------- drawing viewport ---------- */

const pline = "294,577 462,515 543,607 748,536 895,639 1037,538 1243,673 1353,541 1522,674 1593,551 1725,670";

function Arrow({ x1, y1, x2, y2 }: { x1: number; y1: number; x2: number; y2: number }) {
  const len = Math.hypot(x2 - x1, y2 - y1);
  const deg = (Math.atan2(y2 - y1, x2 - x1) * 180) / Math.PI;
  return (
    <g transform={`translate(${x1} ${y1}) rotate(${deg})`} fill="#ff0000">
      <path d={`M0 -1L${len - 20} -1.500L${len - 24} -6L${len} 0L${len - 24} 6L${len - 20} 1.500L0 1z`} />
    </g>
  );
}

const options = ["闭合(C)", "合并(J)", "宽度(W)", "编辑顶点(E)", "拟合(F)", "样条曲线(S)", "非曲线化(D)", "线型生成(L)", "反转(R)", "放弃(U)"];

const cmdOptions: [string, string][] = [["闭合", "C"], ["合并", "J"], ["宽度", "W"], ["编辑顶点", "E"], ["拟合", "F"], ["样条曲线", "S"], ["非曲线化", "D"], ["线型生成", "L"], ["反转", "R"], ["放弃", "U"]];

function CommandLine() {
  return (
    <div className="absolute bottom-0 left-[376px] right-[377px] text-[13px] leading-[15px]">
      <div className="ml-[62px] flex flex-col items-start gap-[5px] font-['DejaVu_Sans_Mono','Noto_Sans_CJK_SC',monospace]">
        <p className="h-[15px] rounded-sm bg-[#505354] px-0.5 text-[#a9abac]">命令<span className="text-xs leading-[15px]">: PE PEDIT</span></p>
        <p className="h-[15px] rounded-sm bg-[#5c5f60] px-0.5 text-[#e2e2e2]">选择多段线或<span className="text-xs leading-[15px]"> [</span>多条<span className="text-xs leading-[15px]">(M)]:</span></p>
      </div>
      <div className="mt-1 flex h-[26px] items-center bg-[#2c323d]">
        <span className="flex w-14 shrink-0 items-center">
          <Svg w={6} h={17} className="ml-1"><path d="M1 0v17M4.500 0v17" strokeWidth="1.500" strokeDasharray="1.500 1.500" /></Svg>
          <button aria-label="关闭命令行" className="ml-[5px]"><Svg w={9} h={9}><path d="M0 0l9 9M9 0L0 9" strokeWidth="2" /></Svg></button>
          <button aria-label="自定义" className="ml-3"><Svg w={14} h={14}><path d="M0 12l7-7c-1-3 1-5 4-5L9 2.500 11.500 5 14 3c0 3-2 5-5 4l-7 7z" fill={FG} stroke="none" /></Svg></button>
        </span>
        <div className="flex h-full min-w-0 flex-1 items-center whitespace-nowrap bg-white font-['DejaVu_Sans_Mono','Noto_Sans_CJK_SC',monospace] text-black">
          <Svg w={16} h={12} className="ml-1"><path d="M9 1c7-1 8 9 2 10H1" stroke="#ddd" />{pencil(1, 0)}</Svg>
          <Tri big color="#666" className="ml-0.5" />
          <b className="ml-1.5 text-xs">PEDIT</b>
          <span className="ml-[5px]">输入选项</span>
          <span className="ml-[7px] text-xs">[</span>
          {cmdOptions.map(([n, k]) => (
            <button key={k} className="mr-[5px] h-[17px] rounded bg-[#d2d2d2] leading-[17px]">
              {n}<span className="text-xs">(<span className="text-[#1a1aff]">{k}</span>)</span>
            </button>
          ))}
          <span className="-ml-1 text-xs">]:</span>
          <button aria-label="历史" className="ml-auto mr-[3px]"><Svg w={8} h={4}><path d="M0 4h8L4 0z" fill="#555" stroke="none" /></Svg></button>
        </div>
      </div>
    </div>
  );
}

function ViewCube() {
  const c = "absolute text-[18px] leading-none text-[#b4b6b4]";
  return (
    <div className="absolute right-[18px] top-[18px] h-[172px] w-[130px]">
      <div className="absolute left-[5px] top-1 size-[120px] rounded-full border-[14px] border-[#434951]" />
      <button className={`${c} left-14 top-0`}>北</button>
      <button className={`${c} bottom-[41px] left-14`}>南</button>
      <button className={`${c} left-0 top-14`}>西</button>
      <button className={`${c} right-0 top-14`}>东</button>
      <button className="absolute left-[39px] top-[38px] flex size-[52px] items-center justify-center border border-[#7f8284] bg-[#abadaf]">
        <span className="flex size-8 items-center justify-center bg-[#9ba3a9] text-[30px] leading-none text-[#4f5459]">上</span>
      </button>
      <button className="absolute left-[41px] top-[151px] flex h-[18px] w-12 items-center rounded border border-[#83869a] bg-[#9a9caa] pl-[3px] font-['Liberation_Sans',sans-serif] text-[11px] text-[#4a4d55]">
        WCS
        <Svg w={9} h={5} className="ml-1"><path d="M.5.500h8l-4 4z" stroke="#c5c7d0" /></Svg>
      </button>
    </div>
  );
}

function NavBar() {
  const k = "#3f444c";
  return (
    <div className="absolute right-1 top-[211px] h-[213px] w-8 rounded bg-[#5a5f62]">
      <svg width="32" height="213" viewBox="0 0 32 213" fill="none" stroke={k} aria-hidden="true">
        <circle cx="26" cy="6" r="4" fill="#474b4e" stroke="none" /><path d="M24 4l4 4M28 4l-4 4" stroke="#6a6f72" />
        <path d="M16 20h10v11a11 11 0 1 1-10-11z" fill="#5b616e" /><circle cx="16" cy="31" r="6" /><path d="M12 35l-4 4M20 35l4 4" />
        <path d="M13.500 50h6l-3 3z" fill={k} stroke="none" /><path d="M4 57h26" stroke="#646a6d" />
        <path d="M11 84C9 79 4 77 5 74s5 2 6 3L9 66c0-3 3-3 3 0l1 6V64c0-3 4-3 4 0v8l2-7c1-3 4-2 3 1l-1 8 2-4c2-2 4-1 3 1-1 5-2 9-4 13z" fill="#5b616e" />
        <path d="M5 90l14 14M19 90L5 104M4.500 94v-4.500H9M15 89.500h4.500V94M4.500 100v4.500H9" /><circle cx="20" cy="105" r="5" fill="#5b616e" /><path d="M23 108l5 4" strokeWidth="3" />
        <path d="M13.500 120h6l-3 3z" fill={k} stroke="none" />
        <ellipse cx="16" cy="141" rx="11" ry="5" /><path d="M14 149v-15h-2l4-6 4 6h-2v15z" fill="#5a5f62" /><path d="M7 145l5-4v6z" fill={k} />
        <path d="M13.500 158h6l-3 3z" fill={k} stroke="none" /><path d="M4 165h26" stroke="#646a6d" />
        <path d="M5 170.500h5v6H5zM13 170.500h5v6h-5zM21 170.500h5v6h-5zM4.500 179.500h16v12h-16z" fill="#5b616e" /><path d="M10 181l6 4-6 4z" fill={k} />
        <circle cx="26" cy="206" r="4" fill="#474b4e" stroke="none" /><path d="M24 205h4M24 207h4" stroke="#6a6f72" />
      </svg>
    </div>
  );
}

function Viewport() {
  return (
    <main className="relative min-w-0 flex-1 overflow-hidden bg-[#222830]">
      <svg className="absolute left-0 top-0" width="1880" height="805" viewBox="35 202 1880 805" fill="none" aria-hidden="true">
        <polyline points={pline} stroke="#26509f" strokeWidth="4" />
        <polyline points={pline} stroke="#f2f5fb" strokeWidth="1" shapeRendering="crispEdges" />
        <g stroke="#fff" strokeWidth="1">
          <path d="M54.500 937v49M55 986.500h50M51.500 981.500h8v9h-8z" />
          <path d="M56 920l6.500 6.500L69 920M62.500 926v7M109 972l13 13M122 972l-13 13" />
        </g>
      </svg>
      <p className="absolute left-1 top-1 whitespace-nowrap leading-[18px] text-black">[−][俯视][二维线框]</p>
      <ViewCube />
      <NavBar />
      <div className="absolute left-[652px] top-[378px] h-6 border border-black bg-[#969696] px-[3px] pr-3.5 leading-5 text-black">输入选项</div>
      <ul role="menu" className="absolute left-[652px] top-[406px] w-[105px] border border-t-0 border-[#808080] bg-white">
        {options.map((o) => (
          <li key={o}>
            {o === "拟合(F)" ? (
              <button role="menuitem" className="-mx-px flex h-[22px] w-[105px] border border-black bg-white pb-px pl-px text-left leading-5 text-white">
                <span className="flex-1 bg-[#0078d7] pl-[21px]">{o}</span>
              </button>
            ) : (
              <button role="menuitem" className="block h-[22px] w-full border-t border-[#808080] pl-[22px] text-left leading-5 text-[#7c7c7c]">{o}</button>
            )}
          </li>
        ))}
      </ul>
      <svg className="absolute left-0 top-0 drop-shadow-[2px_3px_2px_rgba(0,0,0,0.6)]" width="900" height="805" viewBox="35 202 900 805" aria-hidden="true">
        <Arrow x1={552} y1={682} x2={586} y2={601} />
        <Arrow x1={606} y1={749} x2={706} y2={711} />
        <Arrow x1={514} y1={840} x2={522} y2={934} />
        <path d="M772.500 710.500v17l4-4 3 6 3-1.500-3-6h5z" fill="#fff" stroke="#000" />
      </svg>
      <div className="absolute left-[977px] top-[731px] flex h-[25px] w-[60px] items-center justify-center gap-[3px] rounded bg-white text-sm text-[#444]">
        EN
        <Svg w={12} h={13}><path d="M5 1c7 2 8 9 1 11-2 0-4-1-5-2 6 0 7-5 4-9z" stroke="#444" /></Svg>
        <span className="text-[13px]">简</span>
      </div>
      <CommandLine />
    </main>
  );
}

/* ---------- status bar ---------- */

function Cell({ name, on = false, children, width = "w-6" }: { name: string; on?: boolean; children: ReactNode; width?: string }) {
  return (
    <button aria-label={name} className={`flex h-6 shrink-0 items-center justify-center ${width} ${on ? "bg-[#5b8cc0]" : ""}`}>
      <Svg s={18}>{children}</Svg>
    </button>
  );
}

function Group({ children, width, gap = "ml-px" }: { children: ReactNode; width?: string; gap?: string }) {
  return <div className={`flex h-6 shrink-0 items-center bg-[#3b4453] ${width ?? ""} ${gap}`}>{children}</div>;
}

const Dn = () => (
  <button aria-label="展开" className="flex w-4 shrink-0 items-center justify-center"><Tri big /></button>
);

const person = <path d="M9 1l2 4 1 4 5 7-5-3-1-2-2 5-2-5-1 2-5 3 5-7 1-4z" fill={FG} stroke="none" />;
const cube = "M3.500 6.500h8v8h-8zM3.500 6.500l3-4h9v8l-4 4M11.500 6.500l4-4";

function StatusBar() {
  return (
    <footer className="flex h-[30px] shrink-0 border-t border-[#4a505a]">
      <div className="flex h-[18px] items-center pl-[13px]">
        <button className="relative h-[18px] w-[49px] rounded-b-lg bg-[#3b4453] font-bold text-white">模型</button>
        <button className="ml-0.5 h-[18px] w-[50px] rounded-b-lg bg-[#2e3541] text-[#c3c7cd]">布局1</button>
        <button className="ml-1 h-[18px] w-[50px] rounded-b-lg bg-[#2e3541] text-[#c3c7cd]">布局2</button>
        <button aria-label="新建布局" className="ml-1.5 flex h-4 w-[22px] items-center justify-center rounded-bl-md rounded-tr-md bg-[#2e3541]"><Svg w={8} h={8}><path d="M4 0v8M0 4h8" stroke="#b4b8be" strokeWidth="2" /></Svg></button>
      </div>
      <div className="ml-auto mr-1.5 mt-px flex h-6">
        <Group width="w-[180px] justify-end pr-[3px]"><span className="whitespace-nowrap text-[#c3c7cd]">872.0197, 627.0648, 0.0000</span></Group>
        <Group gap="ml-[3px]"><button className="w-[30px] font-bold text-white">模型</button></Group>
        <Group gap="ml-[3px]">
          <Cell name="栅格"><path d="M5.500 2v14M9.500 2v14M13.500 2v14M2 5.500h14M2 9.500h14M2 13.500h14" /></Cell>
          <Cell name="捕捉"><path d="M3 4h13M3 9h13M3 14h13" strokeWidth="2" strokeDasharray="2 3" /></Cell>
          <Dn />
        </Group>
        <Group gap="ml-[3px]"><Cell name="推断约束"><path d="M8.500 13V2.500h7v4h-7" /><rect x="2" y="11" width="6" height="6" fill={FG} stroke="none" /></Cell></Group>
        <Group><Cell name="动态输入" on><path d="M4.500 2v7M1 5.500h7" stroke="#fff" /><rect x="7" y="11" width="10" height="5" fill="#fff" stroke="none" /><path d="M9.500 12v3" stroke="#5b8cc0" /></Cell></Group>
        <Group>
          <Cell name="正交"><path d="M3.500 2v14.500H17M3.500 11.500h5v5" /></Cell>
          <Cell name="极轴追踪"><path d="M12 4a6.500 6.500 0 1 0 3 6M8 9.500h9M8 9.500l8-7" /></Cell>
          <Dn />
          <Cell name="等轴测草图"><path d="M3 3l12 12" stroke="#f0585c" /><path d="M9 2v14" stroke="#5bd184" /><circle cx="9" cy="9" r="1.500" /></Cell>
          <Dn />
        </Group>
        <Group><Cell name="对象捕捉追踪" on><path d="M15 2L3 15.500h14" stroke="#fff" />{dot(7, 8, "#fff", 3)}</Cell></Group>
        <Group>
          <Cell name="对象捕捉" on><path d="M5.500 4.500h10v11h-12V6" stroke="#fff" /><path d="M1.500 1.500h4v4h-4z" stroke="#fff" fill="#5b8cc0" /></Cell>
          <Dn />
        </Group>
        <Group><Cell name="线宽"><path d="M1 3.500h16" /><path d="M1 7h9M12 7h5M1 11h5M8 11h9" strokeWidth="2" /><path d="M1 15h16" strokeWidth="3" /></Cell></Group>
        <Group><Cell name="透明度" on><path d="M1.500 1.500h15v15h-15z" stroke="#fff" /><path d="M3 4.500h12M3 10.500h12" stroke="#fff" strokeWidth="3" strokeDasharray="3 3" /><path d="M6 7.500h9M6 13.500h9" stroke="#fff" strokeWidth="3" strokeDasharray="3 3" /></Cell></Group>
        <Group><Cell name="选择循环"><path d="M4.500 1v7M1 4.500h7" /><rect x="6" y="7" width="11" height="10" fill="#86d9a0" stroke="none" /></Cell></Group>
        <Group><Cell name="三维对象捕捉"><path d={cube} /><path d="M1.500 12.500h4v4h-4z" stroke="#f0945c" fill="#3b4453" /></Cell><Dn /></Group>
        <Group gap="ml-[3px]"><Cell name="动态UCS" on><path d="M4.500 15.500V3M2 5l2.500-3L7 5M4 15.500h12M14 13l3 2.500-3 2" stroke="#fff" /><path d="M12 3l-3 6h3l-2 4 5-6h-3l2-4z" fill="#fff" stroke="none" /></Cell><Cell name="选择过滤"><path d={cube} strokeDasharray="2 1" />{dot(2, 5)}{dot(10, 5)}{dot(2, 13)}{dot(10, 13)}</Cell><Dn /></Group>
        <Group><Cell name="小控件" on><path d="M9 1v9M9 10l-6 4M9 10l6 4M9 3L4 6v7l5 3 5-3V6z" stroke="#fff" /><circle cx="9" cy="9" r="2" fill="#5b8cc0" stroke="#fff" /></Cell><Dn /></Group>
        <Group gap="ml-0.5">
          <Cell name="注释可见性" on>{person}<circle cx="14" cy="4" r="2.500" stroke="#fff" /></Cell>
          <Cell name="自动缩放">{person}<path d="M15 1l-3 5h2l-1 4 4-6h-2z" fill={FG} stroke="none" /></Cell>
          <Cell name="注释比例">{person}</Cell>
          <button className="w-[58px] whitespace-nowrap text-center text-white">1:1 / 100%</button>
          <Dn />
        </Group>
        <Group gap="ml-0.5"><Cell name="切换工作空间"><circle cx="9" cy="9" r="4.500" strokeWidth="3.500" /><circle cx="9" cy="9" r="7" strokeWidth="2.500" strokeDasharray="2.700 2.800" /></Cell><Dn /></Group>
        <Group><Cell name="注释监视器" on><path d="M9 1v16M1 9h16" stroke="#fff" strokeWidth="2" /></Cell></Group>
        <Group gap="ml-[3px]" width="w-[97px]">
          <Cell name="单位"><path d="M5 1h8v16H5z" fill={FG} stroke="none" /><path d="M9 4.500h4M10 7.500h3M9 10.500h4M10 13.500h3" stroke="#333" /></Cell>
          <select aria-label="单位" className="ml-[3px] min-w-0 flex-1 appearance-none bg-transparent px-0.5 font-bold text-white outline-none"><option>小数</option></select>
          <Dn />
        </Group>
        <Group><Cell name="快捷特性"><path d="M3.500 1.500h11v15h-11zM3.500 4h11M8 7.500h5M8 10.500h5M8 13.500h5M5 7.500h1M5 10.500h1M5 13.500h1" /></Cell></Group>
        <Group gap="ml-[3px]"><Cell name="锁定用户界面"><path d="M9 14.500H2.500v-12h13v6M2.500 5h13" /><rect x="9" y="12" width="6" height="5" fill={FG} stroke="none" /><path d="M13.500 12V9.500h3V12" /></Cell><Dn /></Group>
        <Group><Cell name="隔离对象"><path d="M2.500 1.500h7v8h-7z" /><circle cx="14" cy="8" r="3" /><path d="M9 11l4 6H5z" /></Cell></Group>
        <Group gap="ml-[3px]"><Cell name="图形性能" on><circle cx="9" cy="9" r="7.500" /><path d="M6 12l6-6" strokeWidth="2" /></Cell></Group>
        <Group gap="ml-[3px]"><Cell name="坐标标注" width="w-[30px]"><path d="M1 16l4-5M5 3.500h12v8H5z" /><path d="M8 7.500h6" strokeWidth="3" strokeDasharray="2 1" /></Cell></Group>
        <Group gap="ml-[3px]"><Cell name="全屏显示"><path d="M1.500 3.500h15v12h-15zM5 12l3-3M10 8l3-3M4.500 9v3.500H8M10 5.500h3.500V9" /></Cell><Cell name="自定义"><path d="M1 3.500h16M1 9.500h16M1 15.500h16" strokeWidth="3" /></Cell></Group>
      </div>
    </footer>
  );
}

function Watermark() {
  return (
    <div className="pointer-events-none absolute bottom-2 right-0.5 flex items-center opacity-80">
      <svg width="46" height="42" viewBox="0 0 46 42" aria-hidden="true">
        <path d="M40 1C18 0 1 12 3 30c3-3 6-2 7 0C7 14 24 5 40 1z" fill="#2d7fb8" />
        <path d="M12 22c2-8 14-8 14-2s-9 10-14 7c5 0 9-3 9-6s-6-3-9 1z" fill="#1f62a8" />
        <path d="M5 38c14 3 22-3 26-8 6-7-1-12-8-12 14-6 23 4 16 12S16 43 5 38z" fill="#5b9a32" />
      </svg>
      <div className="flex flex-col font-bold leading-none">
        <span className="text-[21px] leading-[24px] text-[#1b5f9e]">极光下载站</span>
        <span className="font-['Liberation_Sans',sans-serif] text-[17px] leading-[18px] text-[#237a45]">www.xz7.com</span>
      </div>
    </div>
  );
}

export default function App() {
  return (
    <div className="flex h-screen min-h-[700px] overflow-hidden bg-white font-['Noto_Sans','Noto_Sans_CJK_SC',sans-serif] text-xs text-[#dcdcdc]">
      <div className="flex w-0.5 shrink-0 flex-col"><span className="h-[281px] bg-[#f1f1f1]" /><span className="h-10 bg-[#555]" /></div>
      <div className="relative flex min-w-0 flex-1 flex-col border-x border-t border-[#0a94da] bg-[#222933]">
        <TitleBar />
        <div className="flex h-[21px] shrink-0 items-center border-b border-[#3d4553] pl-[17px] pr-1.5 pt-px text-[#b5b9bf]">
          <nav className="flex gap-[25px]">
            {menus.map((m) => <button key={m} className="whitespace-nowrap">{m}</button>)}
          </nav>
          <div className="ml-auto flex items-center gap-[7px]">
            <button aria-label="最小化图形"><Svg w={9} h={12}><path d="M0 10.500h9" strokeWidth="2" /></Svg></button>
            <button aria-label="还原图形"><Svg w={12} h={12}><path d="M3.500 4V1h8v5h-3M.5 5.500h8v5h-8z" /><path d="M3 1.500h9M0 5.500h9" strokeWidth="1.500" /></Svg></button>
            <button aria-label="关闭图形"><Svg w={11} h={11}><path d="M1 1l9 9M10 1L1 10" strokeWidth="2" /></Svg></button>
          </div>
        </div>
        <div className="flex h-6 shrink-0 items-end pl-[7px] text-[#b5b9bf]">
          <button className="h-5 w-[42px] bg-[#3b4453] pt-0.5 font-medium text-white">默认</button>
          <div className="ml-[11px] flex gap-5">
            {tabs.map((t) => <button key={t} className="h-5 whitespace-nowrap pt-0.5">{t}</button>)}
          </div>
          <button aria-label="最小化功能区" className="mb-[5px] ml-9 flex items-center gap-[5px]">
            <Svg w={15} h={8}><path d="M0 0h15v8H0z" fill="#fff" stroke="none" /><path d="M5 5.500h5L7.500 3z" fill="#333" stroke="none" /></Svg>
            <Tri />
          </button>
        </div>
        <Ribbon />
        <FileTabs />
        <div className="mx-[3px] h-1 shrink-0 bg-[#3b4453]" />
        <div className="mx-[3px] flex min-h-0 flex-1">
          <aside className="w-[29px] shrink-0 bg-[#3b4453]">
            <div className="ml-px flex w-6 flex-col items-center border border-[#2a313c] pb-px pr-0.5">
              <Svg w={13} h={8}><path d="M0 3.500h13M0 5.500h13" strokeDasharray="1 1" /></Svg>
              {rail.map(([n, ic]) => (
                <button key={n} aria-label={n} className="flex h-[22px] items-center"><Svg>{ic}</Svg></button>
              ))}
            </div>
          </aside>
          <Viewport />
        </div>
        <StatusBar />
        <Watermark />
      </div>
      <div className="flex w-0.5 shrink-0 flex-col"><span className="h-[300px] bg-[#f4f4f4]" /><span className="flex-1 bg-[#c9cbcd]" /></div>
    </div>
  );
}
